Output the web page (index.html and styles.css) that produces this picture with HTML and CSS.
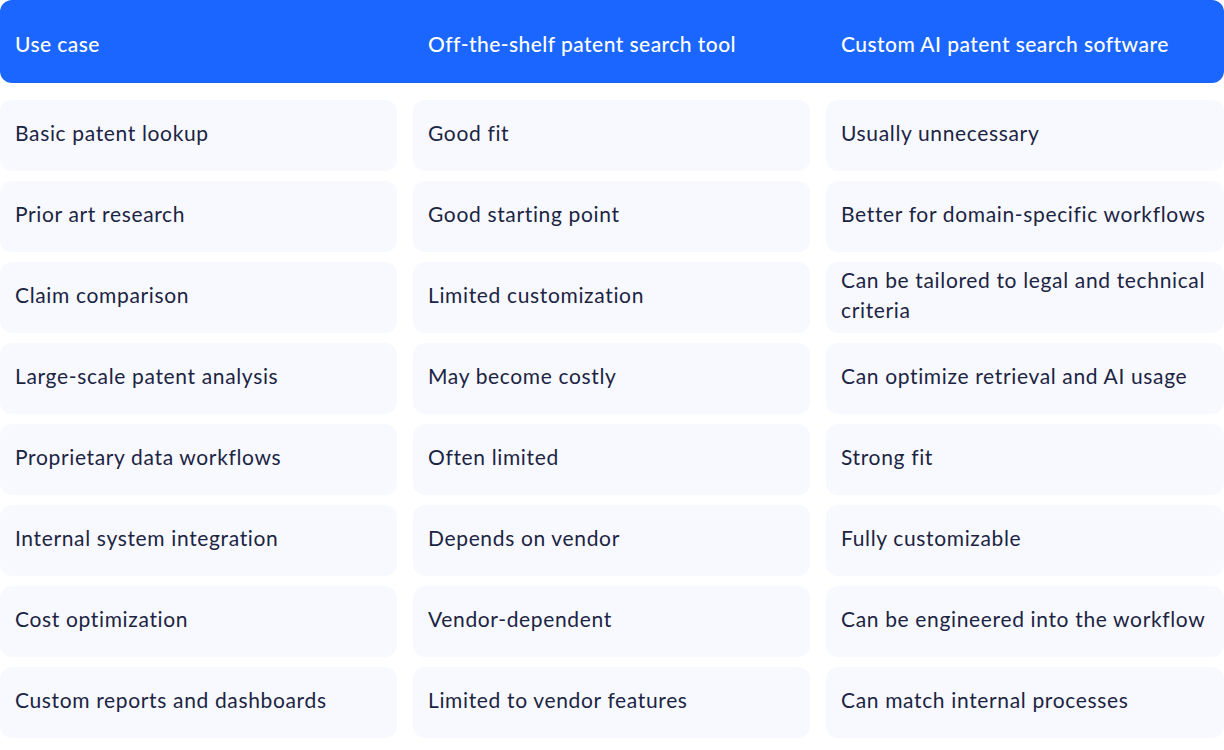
FILE: index.html
```html
<!DOCTYPE html>
<html lang="en">
<head>
<meta charset="utf-8">
<title>Patent search comparison</title>
<link rel="stylesheet" href="styles.css">
</head>
<body>
<div class="table">
  <div class="head">
    <div class="hcell">Use case</div>
    <div class="hcell">Off-the-shelf patent search tool</div>
    <div class="hcell">Custom AI patent search software</div>
  </div>
  <div class="rows">
    <div class="cell">Basic patent lookup</div>
    <div class="cell">Good fit</div>
    <div class="cell">Usually unnecessary</div>

    <div class="cell">Prior art research</div>
    <div class="cell">Good starting point</div>
    <div class="cell">Better for domain-specific workflows</div>

    <div class="cell">Claim comparison</div>
    <div class="cell">Limited customization</div>
    <div class="cell">Can be tailored to legal and technical criteria</div>

    <div class="cell">Large-scale patent analysis</div>
    <div class="cell">May become costly</div>
    <div class="cell">Can optimize retrieval and AI usage</div>

    <div class="cell">Proprietary data workflows</div>
    <div class="cell">Often limited</div>
    <div class="cell">Strong fit</div>

    <div class="cell">Internal system integration</div>
    <div class="cell">Depends on vendor</div>
    <div class="cell">Fully customizable</div>

    <div class="cell">Cost optimization</div>
    <div class="cell">Vendor-dependent</div>
    <div class="cell">Can be engineered into the workflow</div>

    <div class="cell">Custom reports and dashboards</div>
    <div class="cell">Limited to vendor features</div>
    <div class="cell">Can match internal processes</div>
  </div>
</div>
</body>
</html>
```

FILE: styles.css
```css
html, body {
  margin: 0;
  padding: 0;
  background: #ffffff;
}

body {
  font-family: "Lato", "Noto Sans", sans-serif;
  color: #1c2443;
}

.table {
  width: 1224px;
}

.head {
  display: grid;
  grid-template-columns: 397px 397px 398px;
  column-gap: 16px;
  height: 83px;
  align-items: center;
  background: #1a66ff;
  border-radius: 12px;
}

.hcell {
  padding: 4px 15px 0;
  color: #ffffff;
  font-size: 21px;
  letter-spacing: 0.45px;
  font-weight: 500;
}

.rows {
  margin-top: 17px;
  display: grid;
  grid-template-columns: 397px 397px 398px;
  column-gap: 16px;
  row-gap: 10px;
}

.cell {
  display: flex;
  align-items: center;
  box-sizing: border-box;
  min-height: 71px;
  padding: 0 15px 6px;
  background: #f7f9fe;
  border-radius: 12px;
  font-size: 21px;
  letter-spacing: 0.65px;
  line-height: 30px;
}
```
